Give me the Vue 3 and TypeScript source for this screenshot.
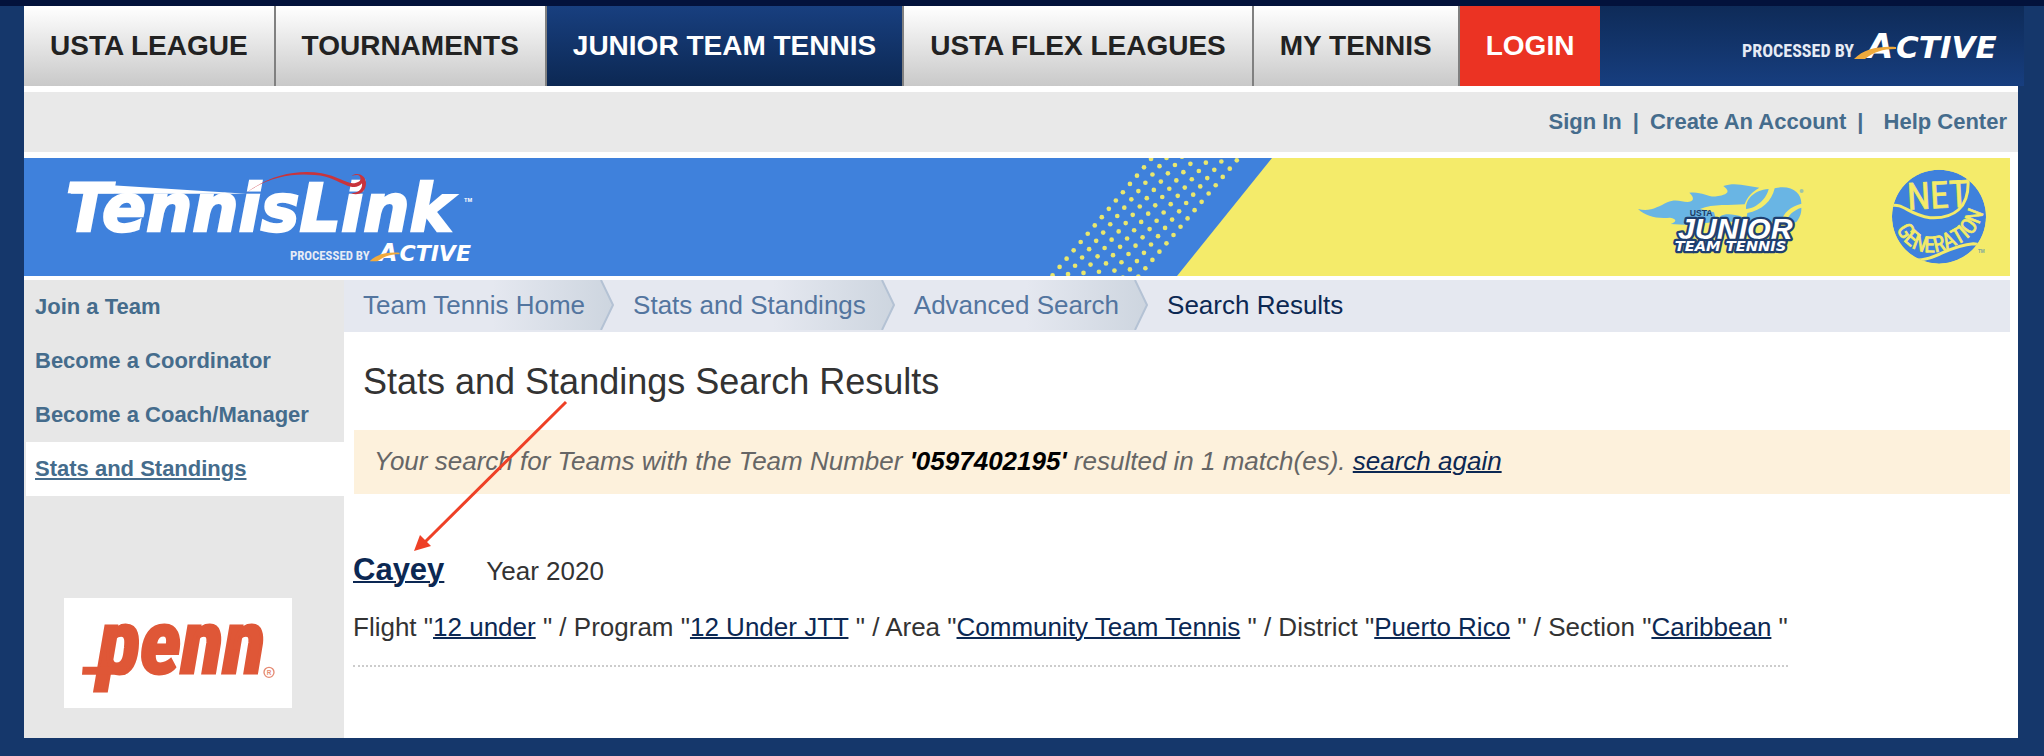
<script setup lang="ts">
interface Tab {
  label: string
  kind: 'plain' | 'active' | 'login'
}

interface Field {
  label: string
  value: string
}

interface Dot {
  x: number
  y: number
}

const tabs: Tab[] = [
  { label: 'USTA LEAGUE', kind: 'plain' },
  { label: 'TOURNAMENTS', kind: 'plain' },
  { label: 'JUNIOR TEAM TENNIS', kind: 'active' },
  { label: 'USTA FLEX LEAGUES', kind: 'plain' },
  { label: 'MY TENNIS', kind: 'plain' },
  { label: 'LOGIN', kind: 'login' },
]

const sideLinks: string[] = ['Join a Team', 'Become a Coordinator', 'Become a Coach/Manager', 'Stats and Standings']
const currentSide = 'Stats and Standings'

const crumbs: string[] = ['Team Tennis Home', 'Stats and Standings', 'Advanced Search']

const fields: Field[] = [
  { label: 'Flight', value: '12 under' },
  { label: 'Program', value: '12 Under JTT' },
  { label: 'Area', value: 'Community Team Tennis' },
  { label: 'District', value: 'Puerto Rico' },
  { label: 'Section', value: 'Caribbean' },
]

// Slanted lattice of dots in the middle of the banner
const dots: Dot[] = []
for (let row = -2; row < 16; row++) {
  for (let col = 0; col < 7; col++) {
    dots.push({
      x: Math.round((372 - 21.1 * row + 46.4 * col) * 10) / 10,
      y: Math.round((52 + 24.9 * row - 3.5 * col) * 10) / 10,
    })
  }
}
</script>

<template>
  <div class="page">
    <header class="topnav">
      <nav class="tabs" aria-label="Primary">
        <a v-for="t in tabs" :key="t.label" href="#" class="tab" :class="t.kind">{{ t.label }}</a>
      </nav>
      <svg class="powered" viewBox="0 0 256 32" role="img" aria-label="Processed by Active">
        <text class="narrow" x="0" y="27" font-size="18">PROCESSED BY</text>
        <text class="wide" x="125" y="28" font-size="34">A</text>
        <text class="wide" x="154" y="28" font-size="31">CTIVE</text>
        <path d="M112 29 C122 19 136 16 154 17 L154 19 C140 19 132 22 123 29 Z" fill="#f0aa3c" />
      </svg>
    </header>

    <div class="sheet">
      <div class="account">
        <a href="#">Sign In</a>
        <span>|</span>
        <a href="#">Create An Account</a>
        <span>|</span>
        <a href="#" class="help">Help Center</a>
      </div>

      <svg class="banner" viewBox="0 0 1986 118" role="img" aria-label="TennisLink, USTA Junior Team Tennis, Net Generation">
        <rect width="1986" height="118" fill="#3f81dc" />
        <svg x="996" y="-8" width="280" height="130" viewBox="0 0 840 390">
          <circle v-for="(d, i) in dots" :key="i" :cx="d.x" :cy="d.y" r="7" fill="#e9e76d" />
        </svg>
        <path d="M1248 0 L1986 0 L1986 118 L1153 118 Z" fill="#f4eb6a" />

        <svg x="16" y="-8" width="460" height="130" viewBox="0 0 1380 390" class="open">
          <path d="M97 98 L620 131 L92 131 Z" fill="#fff" />
          <text class="wide heavy" x="78" y="243" font-size="195">TennisLink</text>
          <path
            d="M615 131 C690 75 770 58 845 70 C890 78 915 98 938 100 C958 98 965 90 960 80 C955 73 945 75 935 78 C950 66 975 73 978 98 C978 128 955 138 933 130 C955 128 968 118 966 100 C955 114 940 113 922 107 C890 95 870 78 825 75 C750 68 680 84 615 131 Z"
            fill="#c8343c"
          />
          <text x="1272" y="156" font-size="17" font-weight="700" fill="#fff">TM</text>
        </svg>
        <svg x="266" y="82" width="182" height="24" viewBox="0 0 256 32" class="open">
          <text class="narrow" x="0" y="27" font-size="18">PROCESSED BY</text>
          <text class="wide" x="125" y="28" font-size="34">A</text>
          <text class="wide" x="154" y="28" font-size="31">CTIVE</text>
          <path d="M112 29 C122 19 136 16 154 17 L154 19 C140 19 132 22 123 29 Z" fill="#f0aa3c" />
        </svg>

        <svg x="1596" y="-3" width="400" height="125" viewBox="0 0 1200 375" class="open">
          <path
            d="M54 162 C90 172 115 155 142 142 C165 131 185 140 202 141 C220 140 226 130 208 113 C245 108 265 128 290 124 C318 120 336 112 310 93 C350 80 385 96 418 98 C395 112 382 125 374 148 C330 152 280 146 240 162 L282 172 L290 200 L205 210 L152 207 C170 200 172 192 150 188 C110 192 78 184 54 162 Z"
            fill="#69b5e4"
          />
          <path d="M296 200 C290 178 320 175 345 180 C370 183 372 190 378 200 Z" fill="#69b5e4" />
          <path d="M446 102 C400 105 376 135 378 162 C410 160 440 130 446 102 Z" fill="#69b5e4" />
          <path d="M464 100 C515 88 545 115 544 146 C512 155 490 172 484 200 L378 200 L382 174 C425 166 455 140 464 100 Z" fill="#69b5e4" />
          <path d="M544 158 C545 176 538 190 528 202 L498 202 C504 180 520 166 544 158 Z" fill="#69b5e4" />
          <circle cx="545" cy="108" r="6" fill="#9cc4a8" />
          <text x="209" y="184" font-size="26" font-weight="700" fill="#1f3c66" class="plainface">USTA</text>
          <text class="outlined plainface" x="174" y="252" font-size="91">JUNIOR</text>
          <text class="outlined" x="164" y="288" font-size="44">TEAM TENNIS</text>

          <defs>
            <clipPath id="ballclip"><circle cx="957" cy="185" r="141" /></clipPath>
            <path id="genarc" d="M828 220 C862 300 940 306 1000 274 C1050 254 1082 226 1100 130" />
          </defs>
          <g clip-path="url(#ballclip)">
            <circle cx="957" cy="185" r="141" fill="#3f81dc" />
            <path d="M812 152 C850 142 865 180 930 188 C1000 192 1050 160 1044 70" class="seam" />
            <path d="M880 316 C950 318 980 272 1060 266 C1072 266 1080 272 1090 270" class="seam" />
          </g>
          <text x="862" y="160" font-size="112" class="ballface" transform="rotate(-3 940 140)">NET</text>
          <text font-size="66" class="ballface"><textPath href="#genarc" startOffset="2">GENERATION</textPath></text>
          <text x="1074" y="294" font-size="14" font-weight="700" fill="#7da6a0" class="plainface">TM</text>
        </svg>
      </svg>

      <div class="columns">
        <aside class="side">
          <nav aria-label="Section">
            <a v-for="s in sideLinks" :key="s" href="#" class="sidelink" :class="{ current: s === currentSide }">{{ s }}</a>
          </nav>
          <a href="#" class="sponsor">
            <svg viewBox="0 0 684 330" role="img" aria-label="Penn">
              <text x="102" y="226" font-size="264" class="penn">penn</text>
              <path d="M56 206 L190 206 L184 230 L54 230 Z" fill="#df5737" />
              <circle cx="615" cy="223" r="15" fill="none" stroke="#e58a72" stroke-width="4" />
              <text x="608" y="230" font-size="19" font-weight="700" fill="#e58a72" class="plainface">R</text>
            </svg>
          </a>
        </aside>

        <main class="main">
          <nav class="crumbs" aria-label="Breadcrumb">
            <a v-for="c in crumbs" :key="c" href="#" class="crumb">
              <svg class="chevron" viewBox="0 0 122 50" aria-hidden="true">
                <defs>
                  <linearGradient id="fade" x1="0" x2="1" y1="0" y2="0">
                    <stop offset="0" stop-color="#e5e8f0" />
                    <stop offset="1" stop-color="#cdd5df" />
                  </linearGradient>
                </defs>
                <path d="M0 0 H109 L121 25 L109 50 H0 Z" fill="url(#fade)" />
                <path d="M109 0 L121 25 L109 50" fill="none" stroke="#b4c2d4" stroke-width="2" />
              </svg>
              <span>{{ c }}</span>
            </a>
            <span class="crumb here">Search Results</span>
          </nav>

          <h1>Stats and Standings Search Results</h1>

          <p class="notice">
            Your search for Teams with the Team Number <b>'0597402195'</b> resulted in 1 match(es). <a href="#">search again</a>
          </p>

          <section class="result">
            <div class="heading">
              <h2><a href="#">Cayey</a></h2>
              <span>Year 2020</span>
            </div>
            <p class="path">
              <template v-for="(f, i) in fields" :key="f.label">{{ (i ? ' / ' : '') + f.label + ' "' }}<a href="#">{{ f.value }}</a>{{ ' "' }}</template>
            </p>
          </section>

          <svg class="arrow" viewBox="0 0 156 152" aria-hidden="true">
            <path d="M152 2 L10 143" stroke="#ee4026" stroke-width="3" />
            <path d="M0 151 L6 135 L17 146 Z" fill="#ee4026" />
          </svg>
        </main>
      </div>
    </div>
  </div>
</template>

<style>
body {
  margin: 0;
  background: #15376b;
}
</style>

<style scoped>
.page {
  border-top: 6px solid #03123b;
  padding-bottom: 18px;
  font-family: "Liberation Sans", Arial, sans-serif;
  font-size: 26px;
  color: #333;
}

.topnav {
  display: flex;
  align-items: center;
  justify-content: space-between;
  margin: 0 20px 0 24px;
  height: 80px;
  padding-right: 26px;
  background: linear-gradient(#0e2b58, #173e7f);
}

.tabs {
  display: flex;
  height: 100%;
}

.tab {
  display: flex;
  align-items: center;
  padding: 0 26px;
  border-right: 2px solid #808080;
  background: linear-gradient(#fff, #c9c9c9);
  color: #222;
  font-size: 28px;
  font-weight: 700;
  text-decoration: none;
  white-space: nowrap;
}

.tab.active {
  background: linear-gradient(#183f7f, #0c2853);
  color: #fff;
}

.tab.login {
  border-right: 0;
  background: #eb3323;
  color: #fff;
}

.powered {
  width: 256px;
  height: 32px;
  flex: none;
  overflow: visible;
}

.open {
  overflow: visible;
}

.narrow {
  font-family: "Liberation Sans Narrow", "Roboto Condensed", "Liberation Sans", sans-serif;
  font-weight: 700;
  fill: #e6ebf5;
}

.wide {
  font-family: "DejaVu Sans", sans-serif;
  font-weight: 700;
  font-style: italic;
  fill: #fff;
}

.heavy {
  stroke: #fff;
  stroke-width: 7px;
}

.outlined {
  font-family: "DejaVu Sans", sans-serif;
  font-weight: 700;
  font-style: italic;
  fill: #fff;
  stroke: #1f3f70;
  stroke-width: 14px;
  stroke-linejoin: round;
  paint-order: stroke;
}

.plainface {
  font-family: "Liberation Sans", sans-serif;
}

.ballface {
  font-family: "Roboto Condensed", "Liberation Sans", sans-serif;
  fill: #f4eb6a;
  stroke: #f4eb6a;
  stroke-width: 2px;
}

.seam {
  fill: none;
  stroke: #f4eb6a;
  stroke-width: 9px;
}

.penn {
  font-family: "Roboto Condensed", "Liberation Sans", sans-serif;
  font-weight: 700;
  font-style: italic;
  fill: #df5737;
  stroke: #df5737;
  stroke-width: 9px;
}

.sheet {
  margin: 0 26px 0 24px;
  padding-top: 6px;
  background: #fff;
}

.account {
  display: flex;
  align-items: center;
  justify-content: flex-end;
  gap: 11px;
  height: 60px;
  padding-right: 11px;
  background: #e9e9e9;
  color: #456c8c;
  font-size: 22px;
  font-weight: 700;
}

.account a {
  color: inherit;
  text-decoration: none;
}

.account .help {
  margin-left: 9px;
}

.banner {
  display: block;
  width: calc(100% - 8px);
  margin: 6px 0 4px;
}

.columns {
  display: flex;
}

.side {
  flex: none;
  width: 320px;
  padding-bottom: 30px;
  background: #e7e7e7;
}

.sidelink {
  display: block;
  margin-left: 2px;
  padding-left: 9px;
  color: #456c8c;
  font-size: 22px;
  font-weight: 700;
  line-height: 54px;
  text-decoration: none;
}

.sidelink.current {
  background: #fff;
  text-decoration: underline;
}

.sponsor {
  display: block;
  width: 228px;
  margin: 102px 0 0 40px;
  background: #fff;
}

.sponsor svg {
  display: block;
  width: 100%;
}

.main {
  position: relative;
  flex: 1;
  min-width: 0;
  padding-right: 8px;
}

.crumbs {
  display: flex;
  height: 52px;
  background: #e5e8f0;
}

.crumb {
  position: relative;
  height: 50px;
  padding: 0 29px 0 19px;
  color: #53759f;
  line-height: 50px;
  text-decoration: none;
  white-space: nowrap;
}

.crumb span {
  position: relative;
}

.crumb.here {
  color: #0c2853;
}

.chevron {
  position: absolute;
  top: 0;
  right: 0;
  width: 122px;
  height: 50px;
}

h1 {
  margin: 28px 0 26px 19px;
  font-size: 36px;
  font-weight: 400;
  line-height: 44px;
}

.notice {
  margin: 0 0 0 10px;
  padding: 0 20px 2px;
  background: #fdf1dc;
  color: #666;
  font-style: italic;
  line-height: 62px;
}

.notice b {
  color: #000;
}

a {
  color: #0c2853;
  text-decoration-thickness: 2px;
}

.result {
  width: fit-content;
  margin: 54px 0 0 9px;
  border-bottom: 2px dotted #ccc;
}

.heading {
  display: flex;
  align-items: baseline;
  gap: 42px;
  line-height: 44px;
}

h2 {
  margin: 0;
  font-size: 31px;
}

.path {
  margin: 0;
  padding: 16px 0 20px;
  line-height: 36px;
}

.arrow {
  position: absolute;
  top: 120px;
  left: 70px;
  width: 156px;
  height: 152px;
  pointer-events: none;
}
</style>
